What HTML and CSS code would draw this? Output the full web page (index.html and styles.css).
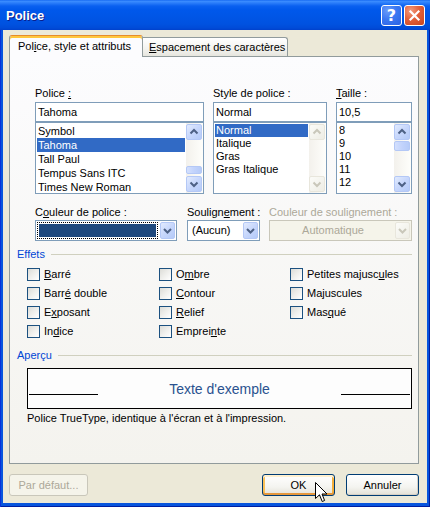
FILE: index.html
```html
<!DOCTYPE html>
<html lang="fr">
<head>
<meta charset="utf-8">
<title>Police</title>
<link rel="stylesheet" href="styles.css">
</head>
<body>
<div class="window">
  <div class="titlebar">
    <span class="title">Police</span>
    <div class="tbtn help">?</div>
    <div class="tbtn close">
      <svg width="19" height="19" viewBox="0 0 19 19"><path d="M5.5 5.5 L13.5 13.5 M13.5 5.5 L5.5 13.5" stroke="#fff" stroke-width="2.2" stroke-linecap="square"/></svg>
    </div>
  </div>
  <div class="client">
    <div class="tabs">
      <div class="tab active">Pol<u>i</u>ce, style et attributs</div>
      <div class="tab"><u>E</u>spacement des caractères</div>
    </div>
    <div class="panel">
      <div class="fontgrid">
        <div class="col c-font">
          <div class="lbl">Police <u>:</u></div>
          <div class="input">Tahoma</div>
          <div class="list">
            <div class="items tall">
              <div class="item">Symbol</div>
              <div class="item sel">Tahoma</div>
              <div class="item">Tall Paul</div>
              <div class="item">Tempus Sans ITC</div>
              <div class="item">Times New Roman</div>
            </div>
            <div class="sb">
              <div class="sbtn up"><div class="face"><svg width="14" height="14" viewBox="0 0 14 14"><path d="M3.5 8.5 L7 5 L10.5 8.5" fill="none" stroke="#4D6185" stroke-width="2"/></svg></div></div>
              <div class="track to-end"><div class="thumb t-small"></div></div>
              <div class="sbtn down"><div class="face"><svg width="14" height="14" viewBox="0 0 14 14"><path d="M3.5 5.5 L7 9 L10.5 5.5" fill="none" stroke="#4D6185" stroke-width="2"/></svg></div></div>
            </div>
          </div>
        </div>
        <div class="col c-style">
          <div class="lbl">Style de police :</div>
          <div class="input">Normal</div>
          <div class="list">
            <div class="items">
              <div class="item sel">Normal</div>
              <div class="item">Italique</div>
              <div class="item">Gras</div>
              <div class="item">Gras Italique</div>
            </div>
            <div class="sb">
              <div class="sbtn up off"><div class="face"><svg width="14" height="14" viewBox="0 0 14 14"><path d="M3.5 8.5 L7 5 L10.5 8.5" fill="none" stroke="#C9C7BA" stroke-width="2"/></svg></div></div>
              <div class="track"></div>
              <div class="sbtn down off"><div class="face"><svg width="14" height="14" viewBox="0 0 14 14"><path d="M3.5 5.5 L7 9 L10.5 5.5" fill="none" stroke="#C9C7BA" stroke-width="2"/></svg></div></div>
            </div>
          </div>
        </div>
        <div class="col c-size">
          <div class="lbl"><u>T</u>aille :</div>
          <div class="input">10,5</div>
          <div class="list">
            <div class="items">
              <div class="item">8</div>
              <div class="item">9</div>
              <div class="item">10</div>
              <div class="item">11</div>
              <div class="item">12</div>
            </div>
            <div class="sb">
              <div class="sbtn up"><div class="face"><svg width="14" height="14" viewBox="0 0 14 14"><path d="M3.5 8.5 L7 5 L10.5 8.5" fill="none" stroke="#4D6185" stroke-width="2"/></svg></div></div>
              <div class="track"><div class="thumb t-top"></div></div>
              <div class="sbtn down"><div class="face"><svg width="14" height="14" viewBox="0 0 14 14"><path d="M3.5 5.5 L7 9 L10.5 5.5" fill="none" stroke="#4D6185" stroke-width="2"/></svg></div></div>
            </div>
          </div>
        </div>
      </div>

      <div class="combogrid">
        <div class="ccol cc-color">
          <div class="lbl">C<u>o</u>uleur de police :</div>
          <div class="combo">
            <div class="focus"><div class="swatch"></div></div>
            <div class="dd"><svg width="13" height="17" viewBox="0 0 13 17"><path d="M3 7 L6.5 10.5 L10 7" fill="none" stroke="#4D6185" stroke-width="2"/></svg></div>
          </div>
        </div>
        <div class="ccol cc-under">
          <div class="lbl">Soulign<u>e</u>ment :</div>
          <div class="combo">
            <div class="val">(Aucun)</div>
            <div class="dd"><svg width="13" height="17" viewBox="0 0 13 17"><path d="M3 7 L6.5 10.5 L10 7" fill="none" stroke="#4D6185" stroke-width="2"/></svg></div>
          </div>
        </div>
        <div class="ccol cc-ucolor">
          <div class="lbl disabled">Couleur de soulignement :</div>
          <div class="combo off">
            <div class="val center">Automatique</div>
            <div class="dd"><svg width="13" height="17" viewBox="0 0 13 17"><path d="M3 7 L6.5 10.5 L10 7" fill="none" stroke="#C9C7BA" stroke-width="2"/></svg></div>
          </div>
        </div>
      </div>

      <div class="group-h">Effets</div>
      <div class="effects">
        <div class="cb"><span class="box"></span><span><u>B</u>arré</span></div>
        <div class="cb"><span class="box"></span><span>Barr<u>é</u> double</span></div>
        <div class="cb"><span class="box"></span><span>E<u>x</u>posant</span></div>
        <div class="cb"><span class="box"></span><span>In<u>d</u>ice</span></div>
        <div class="cb"><span class="box"></span><span>O<u>m</u>bre</span></div>
        <div class="cb"><span class="box"></span><span><u>C</u>ontour</span></div>
        <div class="cb"><span class="box"></span><span><u>R</u>elief</span></div>
        <div class="cb"><span class="box"></span><span>Emprei<u>n</u>te</span></div>
        <div class="cb"><span class="box"></span><span>Petites majusc<u>u</u>les</span></div>
        <div class="cb"><span class="box"></span><span>Ma<u>j</u>uscules</span></div>
        <div class="cb"><span class="box"></span><span>Mas<u>q</u>ué</span></div>
      </div>

      <div class="group-h">Aperçu</div>
      <div class="preview">
        <span class="bl"></span>
        <span class="sample">Texte d'exemple</span>
        <span class="bl"></span>
      </div>
      <div class="desc">Police TrueType, identique à l'écran et à l'impression.</div>
    </div>

    <div class="buttons">
      <div class="btn disabled b-def">Par défaut...</div>
      <div class="btn hot b-ok">OK</div>
      <div class="btn b-cancel">Annuler</div>
    </div>
  </div>
  <svg class="cursor" width="13" height="21" viewBox="0 0 13 21"><path d="M0.5 0.5 L0.5 16.5 L4.5 12.8 L7.2 19.5 L9.6 18.5 L7 12 L12 12 Z" fill="#fff" stroke="#000" stroke-width="1" stroke-linejoin="miter"/></svg>
</div>
</body>
</html>
```
FILE: styles.css
```css
* { box-sizing: border-box; }
html, body { margin: 0; padding: 0; }
body {
  width: 430px;
  height: 507px;
  overflow: hidden;
  font: 11px "Liberation Sans", Arial, sans-serif;
  color: #000;
  background: #0055E5;
}
u { text-decoration: underline; text-underline-offset: 1px; }

.window {
  position: relative;
  width: 430px;
  height: 507px;
  display: flex;
  flex-direction: column;
  background: #0855DD;
  box-shadow: inset 1px 0 #0831D9, inset -1px 0 #001EA0, inset 0 -1px #001EA0;
}

.titlebar {
  height: 30px;
  flex: none;
  display: flex;
  align-items: center;
  gap: 2px;
  padding: 0 5px 0 6px;
  background: linear-gradient(to bottom, #0A5EEE 0px, #3E8FFF 1px, #2A7DFA 3px, #0A60F0 6px, #0058EB 10px, #0055E5 18px, #0052E0 24px, #004BD8 28px, #0041CC 30px);
}
.title {
  flex: 1;
  color: #fff;
  font: bold 13px/15px "Liberation Sans", Arial, sans-serif;
  text-shadow: 1px 1px #0A1E8C;
  padding-top: 1px;
}
.tbtn {
  width: 21px;
  height: 21px;
  border: 1px solid #fff;
  border-radius: 3px;
  display: flex;
  align-items: center;
  justify-content: center;
}
.help {
  background: radial-gradient(circle at 30% 25%, #6A9CFA 0, #3B78F2 45%, #2B61E2 100%);
  color: #fff;
  font: bold 16px/19px "DejaVu Sans", sans-serif;
}
.close {
  background: radial-gradient(circle at 30% 25%, #F39A7C 0, #E2603A 45%, #C9441F 100%);
}

.client {
  flex: 1;
  margin: 0 3px 4px 3px;
  background: #ECE9D8;
  padding: 5px 8px 7px 6px;
  display: flex;
  flex-direction: column;
}

/* tabs */
.tabs {
  display: flex;
  align-items: flex-end;
  height: 22px;
  margin-bottom: -1px;
  position: relative;
  z-index: 1;
}
.tab {
  white-space: nowrap;
  line-height: 13px;
}
.tab.active {
  width: 134px;
  height: 22px;
  background: #FCFCFE;
  border: 1px solid #919B9C;
  border-top: 1px solid #E68B2C;
  border-bottom: none;
  border-radius: 3px 3px 0 0;
  box-shadow: inset 0 2px #FFC73C;
  padding: 4px 0 0 8px;
}
.tab:not(.active) {
  width: 145px;
  height: 19px;
  margin-bottom: 1px;
  border: 1px solid #919B9C;
  border-left: none;
  border-bottom: none;
  border-radius: 0 3px 0 0;
  background: linear-gradient(#FFFFFF, #F3F3EF 60%, #E6E5DE);
  padding: 3px 0 0 6px;
}

.panel {
  height: 408px;
  flex: none;
  border: 1px solid #919B9C;
  background: linear-gradient(#FCFCFE, #F4F3EE);
  padding: 30px 6px 0 7px;
}

/* font grid */
.fontgrid {
  display: flex;
  gap: 9px;
  margin-left: 18px;
}
.c-font { width: 169px; }
.c-style { width: 114px; }
.c-size { width: 76px; }
.lbl {
  height: 13px;
  line-height: 13px;
  margin-bottom: 2px;
  white-space: nowrap;
}
.lbl.disabled { color: #ACA899; }
.input {
  height: 20px;
  border: 1px solid #7F9DB9;
  background: #fff;
  line-height: 18px;
  padding-left: 2px;
}
.list {
  height: 72px;
  border: 1px solid #7F9DB9;
  border-top: 1px solid #7F9DB9;
  background: #fff;
  display: flex;
}
.items {
  flex: 1;
  padding: 1px;
  overflow: hidden;
}
.item {
  height: 13px;
  line-height: 13px;
  padding-left: 1px;
  white-space: nowrap;
}
.items.tall .item { height: 14px; line-height: 14px; }
.item.sel { background: #316AC5; color: #fff; }

.sb {
  width: 17px;
  flex: none;
  display: flex;
  flex-direction: column;
  background: linear-gradient(to right, #F3F1EC, #FEFEFB);
}
.sbtn { height: 17px; flex: none; }
.sbtn.up { padding: 1px 1px 0 0; }
.sbtn.down { padding: 0 1px 1px 0; }
.face {
  width: 100%;
  height: 100%;
  border: 1px solid #B4C8F6;
  border-radius: 2px;
  background: linear-gradient(135deg, #E2EBFE 0%, #C7D7FC 50%, #B4CAF8 100%);
  display: flex;
  align-items: center;
  justify-content: center;
}
.sbtn.off .face {
  border-color: #E8E6DC;
  background: linear-gradient(135deg, #FBFBF8, #EEEDE5);
}
.track {
  flex: 1;
  display: flex;
  flex-direction: column;
  padding: 0 1px 0 0;
}
.track.to-end { justify-content: flex-end; padding-bottom: 2px; }
.thumb {
  border: 1px solid #B4C8F6;
  border-radius: 2px;
  background: linear-gradient(to right, #D4E0FD, #C2D3FC 50%, #B6CBF8);
}
.t-small { height: 8px; }
.t-top { height: 10px; margin-top: 1px; }

/* combos */
.combogrid {
  display: flex;
  margin-left: 18px;
  margin-top: 12px;
}
.cc-color { width: 142px; }
.cc-under { width: 73px; margin-left: 10px; }
.cc-ucolor { width: 143px; margin-left: 9px; }
.ccol .lbl { margin-bottom: 1px; }
.combo {
  height: 21px;
  border: 1px solid #7F9DB9;
  background: #fff;
  display: flex;
  padding: 1px;
}
.combo .val {
  flex: 1;
  line-height: 17px;
  padding-left: 3px;
  white-space: nowrap;
}
.combo .val.center { text-align: center; padding-left: 0; }
.combo .focus {
  flex: 1;
  border: 1px dotted #000;
  padding: 1px;
  margin-right: 2px;
}
.swatch { width: 100%; height: 100%; background: #1F497D; }
.dd {
  width: 15px;
  flex: none;
  border: 1px solid #B4C8F6;
  border-radius: 2px;
  background: linear-gradient(135deg, #E2EBFE 0%, #C7D7FC 50%, #B4CAF8 100%);
  display: flex;
  align-items: center;
  justify-content: center;
}
.combo.off {
  border-color: #C9C7BA;
  background: #F5F4EA;
  color: #ACA899;
}
.combo.off .dd {
  border-color: #E8E6DC;
  background: linear-gradient(135deg, #FBFBF8, #EEEDE5);
}

/* groups */
.group-h {
  display: flex;
  align-items: center;
  height: 13px;
  line-height: 13px;
  color: #0046D5;
  margin-top: 7px;
}
.group-h::after {
  content: "";
  flex: 1;
  height: 1px;
  background: #D0D0BF;
  margin-left: 6px;
}
.effects {
  display: grid;
  grid-template-columns: 132px 131px 1fr;
  grid-template-rows: repeat(4, 19px);
  grid-auto-flow: column;
  margin: 7px 0 0 10px;
}
.effects + .group-h { margin-top: 5px; }
.cb {
  display: flex;
  align-items: flex-start;
  gap: 4px;
  line-height: 13px;
  white-space: nowrap;
}
.box {
  width: 13px;
  height: 13px;
  flex: none;
  border: 1px solid #1C5180;
  background: linear-gradient(135deg, #DCDCD7 0%, #EFEFEC 50%, #FFFFFF 100%);
}

.preview {
  height: 41px;
  margin: 6px 0 0 10px;
  border: 1px solid #000;
  background: #FDFDFD;
  display: flex;
  padding: 0 1px;
}
.preview .bl {
  width: 69px;
  height: 1px;
  background: #000;
  margin-top: 25px;
  flex: none;
}
.preview .sample {
  flex: 1;
  text-align: center;
  font-size: 14px;
  line-height: 16px;
  padding-top: 12px;
  color: #2A528F;
  white-space: nowrap;
}
.desc {
  margin: 3px 0 0 10px;
  line-height: 13px;
}

/* buttons */
.buttons {
  display: flex;
  margin-top: 10px;
}
.btn {
  height: 22px;
  border: 1px solid #003C74;
  border-radius: 3px;
  background: linear-gradient(#FFFFFF, #F4F4F0 60%, #E3E0D6);
  text-align: center;
  line-height: 20px;
  box-shadow: inset -1px -1px #D6D0C5;
}
.b-def { width: 79px; }
.b-ok { width: 73px; margin-left: auto; }
.b-cancel { width: 73px; margin-left: 11px; }
.btn.hot {
  box-shadow: inset 0 2px #FFF0CF, inset 0 -2px #E5973C, inset 2px 0 #F9C15A, inset -2px 0 #F4AE3A;
}
.btn.disabled {
  border-color: #C9C7BA;
  background: #F5F4EA;
  color: #ACA899;
  box-shadow: none;
}

.cursor {
  position: absolute;
  left: 315px;
  top: 482px;
}
```
